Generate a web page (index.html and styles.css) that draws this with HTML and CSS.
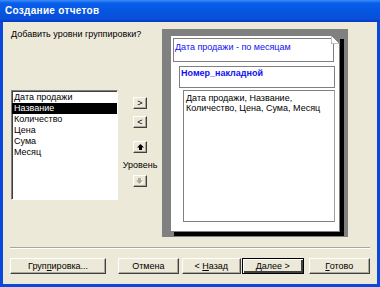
FILE: index.html
```html
<!DOCTYPE html>
<html lang="ru">
<head>
  <meta charset="UTF-8">
  <title>Создание отчетов</title>
  <link rel="stylesheet" href="styles.css">
</head>
<body>

<div class="window">
  <div class="titlebar">Создание отчетов</div>

  <div class="body">
    <div class="main">
      <div class="left">
        <div class="question">Добавить уровни группировки?</div>
        <ul class="list">
          <li>Дата продажи</li>
          <li class="selected">Название</li>
          <li>Количество</li>
          <li>Цена</li>
          <li>Сума</li>
          <li>Месяц</li>
        </ul>
      </div>

      <div class="mid">
        <button class="small b1">&gt;</button>
        <button class="small b2">&lt;</button>
        <button class="small b3">
          <svg width="7" height="6" viewBox="0 0 7 6"><path d="M3.5 0 L7 3.5 L5 3.5 L5 6 L2 6 L2 3.5 L0 3.5 Z" fill="#000"/></svg>
        </button>
        <div class="level">Уровень</div>
        <button class="small b4" disabled>
          <svg width="8" height="7" viewBox="0 0 8 7"><path d="M3 1 L6 1 L6 3.5 L8 3.5 L4.5 7 L1 3.5 L3 3.5 Z" fill="#fff"/><path d="M2 0 L5 0 L5 2.5 L7 2.5 L3.5 6 L0 2.5 L2 2.5 Z" fill="#aca899"/></svg>
        </button>
      </div>

      <div class="preview">
        <div class="page">
          <svg class="fold" width="9" height="9" viewBox="0 0 9 9">
            <path d="M0 0 L9 9 L9 0 Z" fill="#808080"/>
            <path d="M0 0 L0 9 L9 9 Z" fill="#fff" stroke="#808080" stroke-width="1"/>
          </svg>
          <div class="grp g1">Дата продажи - по месяцам</div>
          <div class="grp g2">Номер_накладной</div>
          <div class="detail">Дата продажи, Название,<br>Количество, Цена, Сума, Месяц</div>
        </div>
      </div>
    </div>

    <div class="sep"></div>

    <div class="buttons">
      <button class="btn w-group">Груп<u>п</u>ировка...</button>
      <button class="btn w-cancel">Отмена</button>
      <button class="btn w-back">&lt; <u>Н</u>азад</button>
      <button class="btn w-next default"><u>Д</u>алее &gt;</button>
      <button class="btn w-done"><u>Г</u>отово</button>
    </div>
  </div>
</div>

</body>
</html>
```

FILE: styles.css
```css
body {
  margin: 0;
  background: #ece9d8;
  font-family: "Liberation Sans", Arial, sans-serif;
  font-size: 9px;
  color: #000;
}
.window {
  width: 380px;
  height: 287px;
  box-sizing: border-box;
  background: #ece9d8;
  border: 3px solid #0a47dc;
  border-top: none;
  display: flex;
  flex-direction: column;
}
.titlebar {
  height: 22px;
  margin: 0 -3px;
  padding-left: 5px;
  background: linear-gradient(#3c8cf8 0, #0a5fea 3px, #0455e0 12px, #0a4fd8 19px, #0339c4 22px);
  color: #fff;
  font-weight: bold;
  font-size: 10px;
  line-height: 22px;
  letter-spacing: 0.3px;
}
.body {
  flex: 1;
  padding: 7px 7px 0 8px;
  display: flex;
  flex-direction: column;
}
.main {
  display: flex;
  height: 208px;
}
.left {
  width: 107px;
  white-space: nowrap;
}
.question {
  height: 11px;
  line-height: 11px;
}
.list {
  list-style: none;
  margin: 50px 0 0;
  padding: 1px 0 0;
  width: 107px;
  height: 110px;
  box-sizing: border-box;
  background: #fff;
  border: 1px solid;
  border-color: #808080 #fff #fff #808080;
  box-shadow: inset 1px 1px 0 #404040;
}
.list li {
  height: 11px;
  line-height: 11px;
  padding-left: 2px;
}
.list li.selected {
  background: #000;
  color: #fff;
}
.mid {
  width: 14px;
  margin-left: 15px;
  display: flex;
  flex-direction: column;
  align-items: center;
}
.small {
  width: 14px;
  height: 12px;
  padding: 0;
  box-sizing: border-box;
  background: #ece9d8;
  border: 1px solid;
  border-color: #fff #404040 #404040 #fff;
  box-shadow: inset -1px -1px 0 #aca899;
  font-family: "Liberation Sans", Arial, sans-serif;
  font-size: 9px;
  line-height: 9px;
  color: #000;
  display: flex;
  justify-content: center;
  align-items: center;
}
.b1 { margin-top: 68px; }
.b2 { margin-top: 7px; }
.b3 { margin-top: 13px; }
.b4 { margin-top: 4px; }
.level {
  margin-top: 7px;
  height: 11px;
  line-height: 11px;
  white-space: nowrap;
}
.preview {
  margin-left: 15px;
  width: 186px;
  height: 208px;
  box-sizing: border-box;
  background: #808080;
  padding: 6px 8px 0 8px;
}
.page {
  position: relative;
  width: 170px;
  height: 197px;
  box-sizing: border-box;
  background: #fff;
  border: 1px solid #808080;
  box-shadow: 4px 4px 0 #000;
  padding: 2px 4px 0 2px;
}
.fold {
  position: absolute;
  top: -1px;
  right: -1px;
}
.grp {
  border: 1px solid #808080;
  color: #1010f0;
  box-sizing: border-box;
  padding: 3px 1px 0;
  line-height: 11px;
}
.g1 {
  height: 24px;
  margin-right: 1px;
}
.g2 {
  height: 22px;
  margin: 4px 0 0 6px;
  font-weight: bold;
  padding-top: 1px;
}
.detail {
  margin: 2px 0 0 10px;
  height: 132px;
  box-sizing: border-box;
  border: 1px solid #808080;
  border-right-color: #a0a0a0;
  padding: 2px 2px 0;
  line-height: 10px;
}
.sep {
  margin-top: 10px;
  margin-left: -1px;
  height: 0;
  border-top: 1px solid #aca899;
  border-bottom: 1px solid #fff;
}
.buttons {
  display: flex;
  margin-top: 9px;
  margin-left: -1px;
}
.btn {
  height: 16px;
  padding: 0;
  box-sizing: border-box;
  background: #ece9d8;
  border: 1px solid;
  border-color: #fff #404040 #404040 #fff;
  box-shadow: inset -1px -1px 0 #aca899;
  font-family: "Liberation Sans", Arial, sans-serif;
  font-size: 9px;
  color: #000;
}
.btn.default {
  border: 1px solid #000;
  box-shadow: inset 1px 1px 0 #fff, inset -2px -2px 0 #404040;
}
.w-group { width: 97px; }
.w-cancel { width: 61px; margin-left: 12px; }
.w-back { width: 60px; margin-left: 3px; }
.w-next { width: 62px; margin-left: 1px; }
.w-done { width: 62px; margin-left: 5px; }
```
